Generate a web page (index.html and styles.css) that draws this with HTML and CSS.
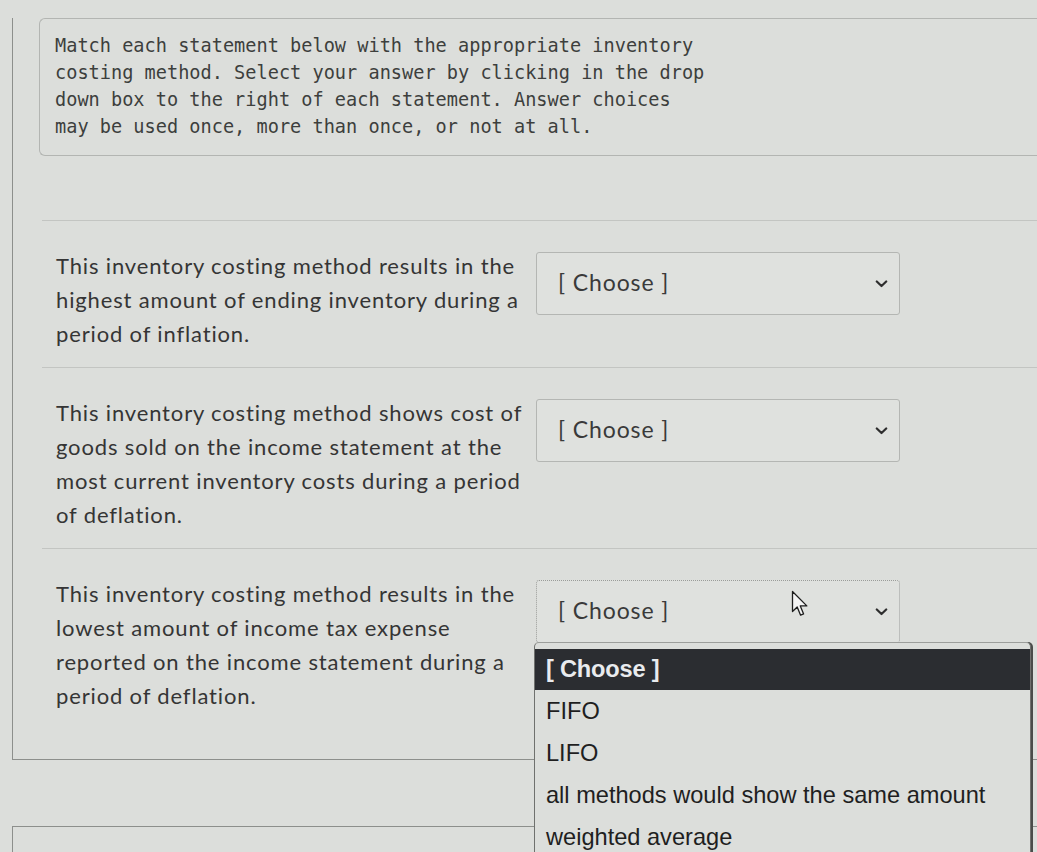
FILE: index.html
```html
<!DOCTYPE html>
<html lang="en">
<head>
<meta charset="utf-8">
<title>Matching question</title>
<link rel="stylesheet" href="styles.css">
</head>
<body>
<div class="quiz">
  <div class="instructions">
    <p>Match each statement below with the appropriate inventory costing method. Select your answer by clicking in the drop down box to the right of each statement. Answer choices may be used once, more than once, or not at all.</p>
  </div>

  <div class="questions">
    <div class="row">
      <div class="statement">This inventory costing method results in the highest amount of ending inventory during a period of inflation.</div>
      <div class="select-wrap">
        <div class="select">
          <span class="value">[ Choose ]</span>
          <svg class="chev" width="13" height="8" viewBox="0 0 13 8"><path d="M1.8 1.5 L6.5 6 L11.2 1.5" fill="none" stroke="#2e2e2e" stroke-width="2.2" stroke-linecap="round" stroke-linejoin="round"/></svg>
        </div>
      </div>
    </div>

    <div class="row">
      <div class="statement">This inventory costing method shows cost of goods sold on the income statement at the most current inventory costs during a period of deflation.</div>
      <div class="select-wrap">
        <div class="select">
          <span class="value">[ Choose ]</span>
          <svg class="chev" width="13" height="8" viewBox="0 0 13 8"><path d="M1.8 1.5 L6.5 6 L11.2 1.5" fill="none" stroke="#2e2e2e" stroke-width="2.2" stroke-linecap="round" stroke-linejoin="round"/></svg>
        </div>
      </div>
    </div>

    <div class="row">
      <div class="statement">This inventory costing method results in the lowest amount of income tax expense reported on the income statement during a period of deflation.</div>
      <div class="select-wrap">
        <div class="select focused">
          <span class="value">[ Choose ]</span>
          <svg class="chev" width="13" height="8" viewBox="0 0 13 8"><path d="M1.8 1.5 L6.5 6 L11.2 1.5" fill="none" stroke="#2e2e2e" stroke-width="2.2" stroke-linecap="round" stroke-linejoin="round"/></svg>
        </div>
        <svg class="cursor" width="18" height="28" viewBox="0 0 18 28"><path d="M1.5 1.5 L1.5 21.5 L6.2 17 L9.6 25.2 L12.6 23.9 L9.3 15.9 L15.8 15.9 Z" fill="#f4f4f4" stroke="#1e1e1e" stroke-width="1.3" stroke-linejoin="round"/></svg>
        <ul class="listbox">
          <li class="active">[ Choose ]</li>
          <li>FIFO</li>
          <li>LIFO</li>
          <li>all methods would show the same amount</li>
          <li>weighted average</li>
        </ul>
      </div>
    </div>
  </div>
</div>
<div class="next-box"></div>
</body>
</html>
```

FILE: styles.css
```css
html, body {
  margin: 0;
  padding: 0;
  background: #dcdedb;
  overflow: hidden;
}

body {
  width: 1037px;
  height: 852px;
  color: #333;
}

.quiz {
  margin-left: 12px;
  border-left: 1px solid #8d8f8c;
  border-bottom: 1px solid #8d8f8c;
  padding-bottom: 30px;
}

.instructions {
  margin: 18px 0 0 26px;
  border: 1px solid #b3b5b2;
  border-right: none;
  border-radius: 6px 0 0 6px;
  padding: 13px 15px 15px 15px;
}

.instructions p {
  margin: 0;
  width: 58.5ch;
  font-family: "DejaVu Sans Mono", "Liberation Mono", monospace;
  font-size: 18.6px;
  line-height: 27px;
  color: #3d3f3d;
}

.questions {
  margin: 64px 0 0 29px;
}

.row {
  display: flex;
  align-items: flex-start;
  border-top: 1px solid #c3c5c2;
  padding: 28px 0 16px 0;
}

.statement {
  width: 480px;
  padding-left: 14px;
  font-family: Lato, "Open Sans", sans-serif;
  font-size: 22px;
  letter-spacing: 0.85px;
  font-variant-ligatures: none;
  line-height: 34px;
  color: #353535;
}

.select-wrap {
  position: relative;
  margin-top: 3px;
}

.select {
  box-sizing: border-box;
  width: 364px;
  height: 63px;
  border: 1px solid #b4b6b3;
  border-radius: 3px;
  background: #dfe1de;
  display: flex;
  align-items: center;
  justify-content: space-between;
  padding: 0 11px 0 21px;
}

.select.focused {
  border: 1px dotted #9a9c99;
}

.value {
  font-family: Lato, "Open Sans", sans-serif;
  font-size: 23px;
  letter-spacing: 0.9px;
  font-variant-ligatures: none;
  color: #3a3a3a;
  margin-top: -4px;
}

.chev {
  display: block;
}

.cursor {
  position: absolute;
  left: 255px;
  top: 10px;
}

.listbox {
  position: absolute;
  left: -2px;
  top: 62px;
  width: 497px;
  height: 240px;
  margin: 0;
  padding: 6px 0 0 0;
  list-style: none;
  background: #dcdedb;
  border: 1px solid #6f716e;
  border-top-color: #9c9e9b;
  border-radius: 5px 5px 0 0;
  box-shadow: 2px 0 0 #4a4c4a;
  box-sizing: border-box;
}

.listbox li {
  height: 42px;
  line-height: 42px;
  padding-left: 11px;
  font-family: "Liberation Sans", Arial, sans-serif;
  font-size: 23.6px;
  color: #1f1f1f;
}

.listbox li.active {
  height: 41px;
  line-height: 41px;
  background: #2b2d31;
  color: #e9ebee;
  font-weight: bold;
  letter-spacing: -0.2px;
}

.next-box {
  margin: 66px 0 0 12px;
  height: 40px;
  border-top: 1px solid #8d8f8c;
  border-left: 1px solid #8d8f8c;
}
```
